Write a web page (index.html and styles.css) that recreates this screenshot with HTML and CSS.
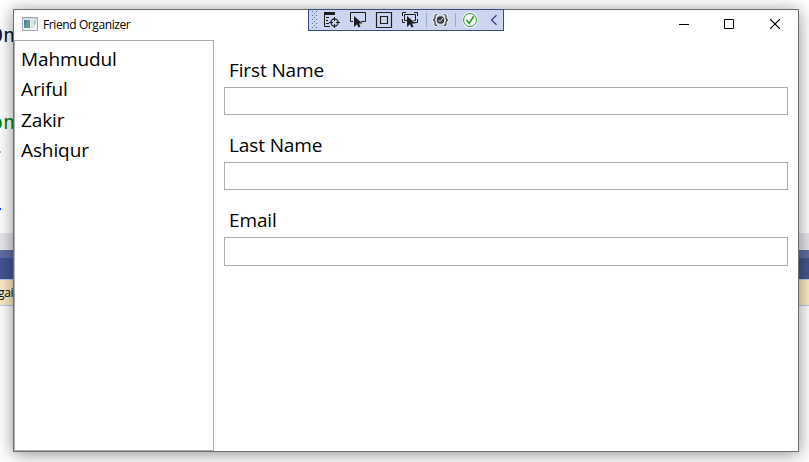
FILE: index.html
```html
<!DOCTYPE html>
<html lang="en">
<head>
<meta charset="utf-8">
<title>Friend Organizer</title>
<link rel="stylesheet" href="styles.css">
</head>
<body>
<div class="desktop">
  <div class="editor">
    <div class="code">
      <span class="code-line heading">On</span>
      <span class="code-line comment">on</span>
      <span class="code-mark pale"></span>
      <span class="code-mark blue"></span>
    </div>
    <div class="scroll-strip"></div>
    <div class="dock-edge"></div>
    <div class="dock"></div>
    <div class="notice"><span>gai</span></div>
  </div>
  <main class="window">
    <header class="titlebar">
      <svg class="app-icon" width="16" height="14" viewBox="0 0 16 14">
        <rect x=".5" y=".5" width="15" height="13" fill="#f1f3f5" stroke="#a2a7ac"/>
        <rect x="1" y="1" width="14" height="1.5" fill="#d3d8dd"/>
        <rect x="2" y="3" width="6" height="8" fill="#5b94a6"/>
        <path d="M2 3h3v5H2z" fill="#4e7fa8"/><path d="M4 5h4v6H4z" fill="#5fa18b"/>
        <rect x="9" y="3" width="3" height="8" fill="#dde4e8"/>
        <path d="M12 3h2v4l-2 2z" fill="#a9cfb9"/>
      </svg>
      <h1 class="title">Friend Organizer</h1>
      <svg class="control" width="46" height="30" viewBox="0 0 46 30"><path d="M18 14.500h10" stroke="#000" fill="none"/></svg>
      <svg class="control" width="46" height="30" viewBox="0 0 46 30"><path d="M17.500 9.500h9v9h-9z" stroke="#000" fill="none"/></svg>
      <svg class="control" width="45" height="30" viewBox="0 0 45 30"><path d="M17.500 9.500l9 9M26.500 9.500l-9 9" stroke="#000" stroke-width="1.100" stroke-linecap="square" fill="none"/></svg>
    </header>
    <div class="content">
      <ul class="friends">
        <li>Mahmudul</li>
        <li>Ariful</li>
        <li>Zakir</li>
        <li>Ashiqur</li>
      </ul>
      <form class="details">
        <label for="first">First Name</label>
        <input id="first" type="text">
        <label for="last">Last Name</label>
        <input id="last" type="text">
        <label for="email">Email</label>
        <input id="email" class="tall" type="text">
      </form>
    </div>
    <svg class="debugbar" width="196" height="22" viewBox="0 0 196 22">
      <defs>
        <pattern id="grip" width="4" height="4" patternUnits="userSpaceOnUse" x="4" y="2">
          <path d="M0 0h1v1H0zM2 2h1v1H2z" fill="#5e6a96"/>
        </pattern>
      </defs>
      <rect x=".5" y=".5" width="195" height="21" fill="#ccd5f0" stroke="#3d4b83"/>
      <rect x="4" y="2" width="5" height="17" fill="url(#grip)"/>
      <g fill="none" stroke="#1e1e1e">
        <path d="M16 3h11v3H16z" fill="#1e1e1e" stroke="none"/>
        <path d="M16.500 5v12.500H22M18 8.500h3M18 11.500h2M18 14.500h3"/>
        <circle cx="26.500" cy="13.500" r="3.600" stroke-width="1.200"/>
        <path d="M26.500 8v4M26.500 15v4M21 13.500h4M28 13.500h4"/>
        <path d="M45 12.500h-2.500v-9h15v9H53"/>
        <path d="M46 7v11l3-2.700 1.500 3.200 2-1-1.500-3h3.500z" fill="#1e1e1e" stroke="none"/>
        <path d="M68.500 3.500h15v15h-15zM72.500 7.500h7v7h-7z" stroke-width="1.200"/>
        <path d="M94.500 7V3.500H98M106 3.500h3.500V7M109.500 10v3.500H106M94.500 10v3.500H97M99 11.500h-2.500v-6h11v6h-2"/>
        <path d="M99 7v11l3-2.700 1.500 3.200 2-1-1.500-3h3.500z" fill="#1e1e1e" stroke="none"/>
      </g>
      <path d="M118.500 4v14M147.500 4v14" stroke="#94a6cc"/>
      <path d="M129 5.500q-2 0-2 2v2L125.500 11l1.500 1.500v2q0 2 2 2M136 5.500q2 0 2 2v2l1.500 1.500-1.500 1.500v2q0 2-2 2" fill="none" stroke="#f4f6fc" stroke-width="3"/>
      <path d="M129 5.500q-2 0-2 2v2L125.500 11l1.500 1.500v2q0 2 2 2M136 5.500q2 0 2 2v2l1.500 1.500-1.500 1.500v2q0 2-2 2" fill="none" stroke="#333" stroke-width="1.200"/>
      <circle cx="132.500" cy="11" r="3.700" fill="#3a3a3a"/>
      <path d="M130.500 11l1.500 1.800 3-4" fill="none" stroke="#e8ecf6"/>
      <circle cx="162" cy="11" r="7" fill="#fff" stroke="#f2f5fc" stroke-width="2"/>
      <circle cx="162" cy="11" r="6.500" fill="#f8fbf8" stroke="#339933"/>
      <path d="M158.500 11l2.700 3.300 4.500-7" fill="none" stroke="#339933" stroke-width="1.600"/>
      <path d="M188.500 6.300l-5 4.700 5 4.700" fill="none" stroke="#35416e" stroke-width="1.200"/>
    </svg>
  </main>
</div>
</body>
</html>
```

FILE: styles.css
```css
* { box-sizing: border-box; }
body {
  margin: 0;
  overflow: hidden;
  background: #fff;
  color: #000;
  font-family: "Open Sans", "Noto Sans", sans-serif;
}
.desktop {
  display: grid;
  width: 809px;
  height: 462px;
  overflow: hidden;
}
.editor, .window { grid-area: 1 / 1; }
.editor { display: flex; flex-direction: column; }
.code { height: 233px; overflow: hidden; display: flex; flex-direction: column; }
.code-line {
  margin-left: -9px;
  font: 20px/26px "DejaVu Sans Mono", monospace;
}
.heading { margin-top: 22px; color: #10173c; }
.comment { margin-top: 61px; color: #078007; }
.code-mark { width: 1px; height: 2px; }
.pale { margin-top: 16px; background: #7fb5e8; }
.blue { margin-top: 55px; background: #0048ff; }
.scroll-strip { height: 17px; background: #e6e6eb; }
.dock-edge { height: 8px; background: #606ea2; }
.dock { height: 21px; background: #42568f; }
.notice {
  height: 27px;
  border: solid #bbcaf0;
  border-width: 1px 0;
  background: #fdebc3;
  overflow: hidden;
  font-size: 12px;
  line-height: 26px;
}
.notice span { margin-left: -2px; letter-spacing: -.3px; }
.window {
  position: relative;
  display: flex;
  flex-direction: column;
  width: 786px;
  height: 443px;
  margin: 9px 0 0 13px;
  border: 1px solid #707070;
  background: #fff;
  box-shadow: 0 2px 16px rgba(0, 0, 0, .45);
}
.titlebar { display: flex; height: 30px; flex: none; }
.app-icon { margin: 7px 5px 0 8px; }
.title {
  flex: 1;
  margin: 0;
  font-size: 12px;
  font-weight: 400;
  line-height: 29px;
  letter-spacing: -.4px;
}
.control { flex: none; }
.content { display: flex; flex: 1; }
.friends {
  width: 200px;
  margin: 0;
  padding: 3px 6px;
  border: 1px solid #abadb3;
  list-style: none;
}
.friends li {
  height: 30.4px;
  font-size: 19px;
  line-height: 31px;
  letter-spacing: -.1px;
}
.details {
  flex: 1;
  display: flex;
  flex-direction: column;
  padding: 14px 10px 0;
}
.details label {
  height: 33px;
  padding-left: 5px;
  font-size: 19px;
  line-height: 32px;
  letter-spacing: -.12px;
}
.details input {
  height: 28px;
  margin: 0 0 14px;
  padding: 0 5px;
  border: 1px solid #abadb3;
  background: #fff;
  font: inherit;
  outline: none;
}
.details .tall { height: 29px; }
.debugbar { position: absolute; top: -1px; left: 294px; }
```
